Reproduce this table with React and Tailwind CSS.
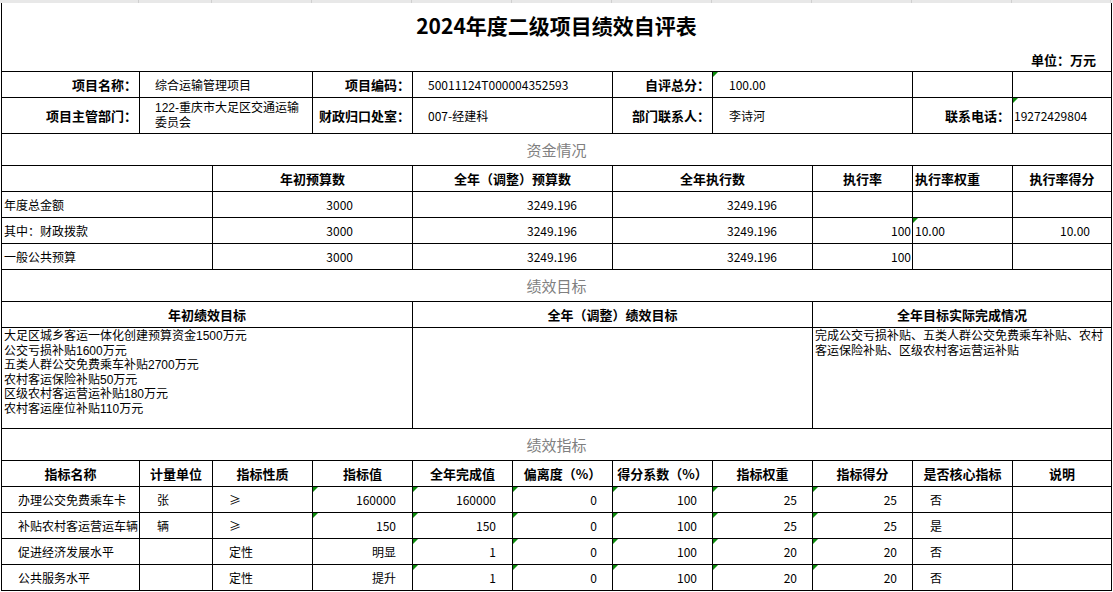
import React from "react";

const funds = [
  { label: "年度总金额", plan: "3000", adj: "3249.196", done: "3249.196", rate: "", weight: "", score: "" },
  { label: "其中：财政拨款", plan: "3000", adj: "3249.196", done: "3249.196", rate: "100", weight: "10.00", score: "10.00", tri: true },
  { label: "一般公共预算", plan: "3000", adj: "3249.196", done: "3249.196", rate: "100", weight: "", score: "" },
];

const goals = [
  "大足区城乡客运一体化创建预算资金1500万元",
  "公交亏损补贴1600万元",
  "五类人群公交免费乘车补贴2700万元",
  "农村客运保险补贴50万元",
  "区级农村客运营运补贴180万元",
  "农村客运座位补贴110万元",
];

const indicators = [
  { name: "办理公交免费乘车卡", unit: "张", kind: "≥", target: "160000", actual: "160000", dev: "0", coef: "100", weight: "25", score: "25", core: "否", numTarget: true },
  { name: "补贴农村客运营运车辆", unit: "辆", kind: "≥", target: "150", actual: "150", dev: "0", coef: "100", weight: "25", score: "25", core: "是", numTarget: true },
  { name: "促进经济发展水平", unit: "", kind: "定性", target: "明显", actual: "1", dev: "0", coef: "100", weight: "20", score: "20", core: "否" },
  { name: "公共服务水平", unit: "", kind: "定性", target: "提升", actual: "1", dev: "0", coef: "100", weight: "20", score: "20", core: "否" },
];

function Cell({ className = "", tri = false, children }) {
  return (
    <div className={`relative flex items-center whitespace-nowrap border-r border-b border-black ${className}`}>
      {tri && (
        <span className="absolute left-0 top-0 h-0 w-0 border-t-[5px] border-r-[5px] border-t-[#0b8a0b] border-r-transparent" />
      )}
      {children}
    </div>
  );
}

function Label({ className = "", children }) {
  return <Cell className={`justify-end pr-[2px] text-[13px] font-bold ${className}`}>{children}</Cell>;
}

function Head({ className = "", children }) {
  return <Cell className={`justify-center text-[13px] font-bold ${className}`}>{children}</Cell>;
}

function Section({ children }) {
  return <Cell className="col-span-11 justify-center text-[15px] text-[#808080]">{children}</Cell>;
}

export default function App() {
  return (
    <div className="w-[1113px] h-[592px] overflow-hidden bg-white text-black text-[12px] leading-[14px] font-['Noto_Sans_CJK_SC',sans-serif]">
      {/* column header strip of the sheet */}
      <div className="flex h-[3px] bg-[#e8e8e8]">
        <div className="w-[139px] border-r border-[#d0d0d0]" />
        <div className="w-[73px] border-r border-[#d0d0d0]" />
        <div className="w-[100px] border-r border-[#d0d0d0]" />
        <div className="w-[100px] border-r border-[#d0d0d0]" />
        <div className="w-[100px] border-r border-[#d0d0d0]" />
        <div className="w-[100px] border-r border-[#d0d0d0]" />
        <div className="w-[100px] border-r border-[#d0d0d0]" />
        <div className="w-[100px] border-r border-[#d0d0d0]" />
        <div className="w-[100px] border-r border-[#d0d0d0]" />
        <div className="w-[100px] border-r border-[#d0d0d0]" />
        <div className="w-[99px] border-r border-[#d0d0d0]" />
      </div>

      <div className="ml-[1px] grid w-[1111px] grid-cols-[138px_73px_repeat(8,100px)_99px] grid-rows-[69px_26px_36px_32px_26px_26px_26px_26px_32px_26px_101px_32px_26px_26px_26px_26px_26px] border-l border-black">
        {/* title */}
        <div className="col-span-11 flex flex-col border-r border-b border-black pt-[10px]">
          <div className="text-center text-[21px] leading-[24px] font-bold">2024年度二级项目绩效自评表</div>
          <div className="mt-[15px] pr-[15px] text-right text-[13px] leading-[16px] font-bold">单位：万元</div>
        </div>

        {/* project info */}
        <Label>项目名称：</Label>
        <Cell className="col-span-2 pl-[15px]">综合运输管理项目</Cell>
        <Label>项目编码：</Label>
        <Cell className="col-span-2 pl-[15px]">50011124T000004352593</Cell>
        <Label>自评总分：</Label>
        <Cell className="col-span-2 pl-[16px]" tri>100.00</Cell>
        <Cell />
        <Cell />

        <Label>项目主管部门：</Label>
        <Cell className="col-span-2 pl-[15px] leading-[15px] font-['Liberation_Sans','Noto_Sans_CJK_SC',sans-serif]">
          <span>
            122-重庆市大足区交通运输
            <br />
            委员会
          </span>
        </Cell>
        <Label>财政归口处室：</Label>
        <Cell className="col-span-2 pl-[15px]">007-经建科</Cell>
        <Label>部门联系人：</Label>
        <Cell className="col-span-2 pl-[16px]">李诗河</Cell>
        <Label>联系电话：</Label>
        <Cell className="pl-[1px]" tri>19272429804</Cell>

        {/* funding */}
        <Section>资金情况</Section>
        <Cell className="col-span-2" />
        <Head className="col-span-2">年初预算数</Head>
        <Head className="col-span-2">全年（调整）预算数</Head>
        <Head className="col-span-2">全年执行数</Head>
        <Head>执行率</Head>
        <Cell className="pl-[2px] text-[13px] font-bold">执行率权重</Cell>
        <Head>执行率得分</Head>
        {funds.map((f) => (
          <React.Fragment key={f.label}>
            <Cell className="col-span-2 pl-[2px]">{f.label}</Cell>
            <Cell className="col-span-2 justify-end pr-[59px]">{f.plan}</Cell>
            <Cell className="col-span-2 justify-end pr-[35px]">{f.adj}</Cell>
            <Cell className="col-span-2 justify-end pr-[35px]">{f.done}</Cell>
            <Cell className="justify-end pr-[1px]">{f.rate}</Cell>
            <Cell className="pl-[2px]" tri={f.tri}>{f.weight}</Cell>
            <Cell className="justify-end pr-[21px]">{f.score}</Cell>
          </React.Fragment>
        ))}

        {/* goals */}
        <Section>绩效目标</Section>
        <Head className="col-span-4">年初绩效目标</Head>
        <Head className="col-span-4">全年（调整）绩效目标</Head>
        <Head className="col-span-3">全年目标实际完成情况</Head>
        <Cell className="col-span-4 !items-start pl-[2px] pt-[1px] leading-[14.5px] font-['Liberation_Sans','Noto_Sans_CJK_SC',sans-serif]">
          <div>
            {goals.map((g) => (
              <div key={g}>{g}</div>
            ))}
          </div>
        </Cell>
        <Cell className="col-span-4" />
        <Cell className="col-span-3 !items-start pl-[2px] pt-[1px] leading-[14.5px] font-['Liberation_Sans','Noto_Sans_CJK_SC',sans-serif]">
          <div>
            <div>完成公交亏损补贴、五类人群公交免费乘车补贴、农村</div>
            <div>客运保险补贴、区级农村客运营运补贴</div>
          </div>
        </Cell>

        {/* indicators */}
        <Section>绩效指标</Section>
        <Head>指标名称</Head>
        <Head>计量单位</Head>
        <Head>指标性质</Head>
        <Head>指标值</Head>
        <Head>全年完成值</Head>
        <Head>偏离度（%）</Head>
        <Head>得分系数（%）</Head>
        <Head>指标权重</Head>
        <Head>指标得分</Head>
        <Head>是否核心指标</Head>
        <Head>说明</Head>
        {indicators.map((r) => (
          <React.Fragment key={r.name}>
            <Cell className="pl-[16px]">{r.name}</Cell>
            <Cell className="pl-[17px]">{r.unit}</Cell>
            <Cell className="pl-[16px]">{r.kind}</Cell>
            <Cell className="justify-end pr-[16px]" tri={r.numTarget}>{r.target}</Cell>
            <Cell className="justify-end pr-[16px]" tri>{r.actual}</Cell>
            <Cell className="justify-end pr-[15px]" tri>{r.dev}</Cell>
            <Cell className="justify-end pr-[15px]" tri>{r.coef}</Cell>
            <Cell className="justify-end pr-[15px]" tri>{r.weight}</Cell>
            <Cell className="justify-end pr-[15px]" tri>{r.score}</Cell>
            <Cell className="pl-[17px]">{r.core}</Cell>
            <Cell />
          </React.Fragment>
        ))}
      </div>
    </div>
  );
}
